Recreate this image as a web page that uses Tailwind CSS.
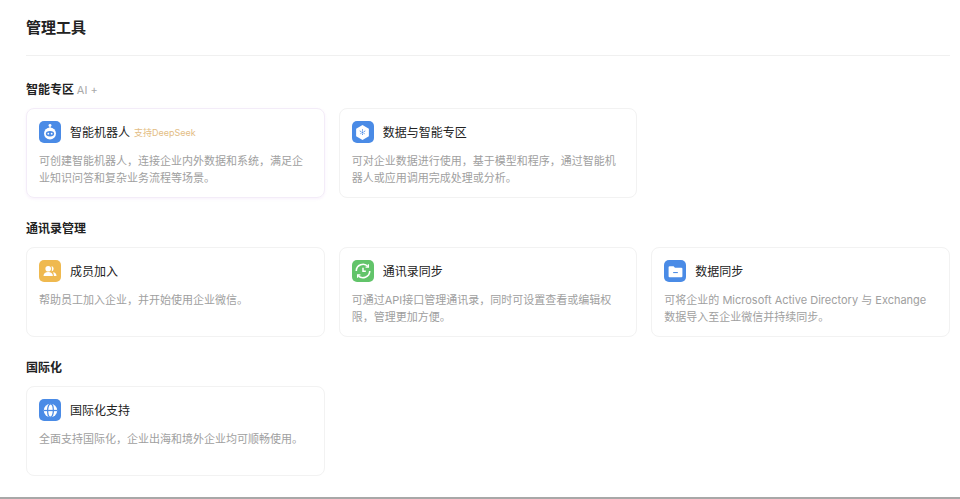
<!DOCTYPE html>
<html lang="zh-CN">
<head>
    <meta charset="UTF-8">
    <title>管理工具</title>
    <script src="https://cdn.jsdelivr.net/npm/@tailwindcss/browser@4"></script>
</head>
<body class="bg-white h-[499px] overflow-hidden font-['Inter','Noto_Sans_CJK_SC',sans-serif] text-[#222222]">
    <div class="h-[499px] pl-[26px] pr-[10px] pt-[17px] border-b-2 border-[#a8a8a8]">
        <!-- Header -->
        <h1 class="h-[39px] text-[15px] leading-[22px] font-bold border-b border-[#f0f0f0]">管理工具</h1>

        <!-- 智能专区 -->
        <h2 class="mt-[24px] h-[19px] text-[12px] leading-[19px] font-bold">智能专区 <span class="font-normal text-[#a9a9a9] text-[11px]">AI +</span></h2>
        <div class="mt-[9px] grid grid-cols-3 gap-x-[14px]">
            <div class="h-[90px] rounded-lg border border-[#f3ecf8] pt-[12px] px-[12px] shadow-[0_1px_3px_rgba(190,120,230,0.10)]">
                <div class="flex items-center h-[22px]">
                    <div class="w-[22px] h-[22px] rounded-[5px] bg-[#4a8be6] flex items-center justify-center">
                        <svg class="w-[18px] h-[18px]" viewBox="0 0 16 16"><circle cx="8" cy="2.200" r="1.300" fill="#fff"/><path d="M8 3v2" stroke="#fff"/><circle cx="8" cy="9.300" r="5.300" fill="#fff"/><ellipse cx="8" cy="9.500" rx="3.700" ry="2.400" fill="#4a8be6"/><circle cx="6.500" cy="9.500" r=".8" fill="#fff"/><circle cx="9.500" cy="9.500" r=".8" fill="#fff"/></svg>
                    </div>
                    <span class="ml-[9px] pt-[2px] text-[12px] leading-[22px]">智能机器人</span>
                    <span class="ml-[4px] pt-[1px] text-[9px] leading-[22px] text-[#e3bd84]">支持DeepSeek</span>
                </div>
                <p class="mt-[10px] text-[11px] leading-[17px] text-[#a0a0a0]">可创建智能机器人，连接企业内外数据和系统，满足企业知识问答和复杂业务流程等场景。</p>
            </div>
            <div class="h-[90px] rounded-lg border border-[#f2f2f2] pt-[12px] px-[12px]">
                <div class="flex items-center h-[22px]">
                    <div class="w-[22px] h-[22px] rounded-[5px] bg-[#4a8be6] flex items-center justify-center">
                        <svg class="w-[17px] h-[17px]" viewBox="0 0 16 16"><path d="M8 1l6 3.500v7L8 15l-6-3.500v-7z" fill="#fff"/><path d="M8 5v6M5.400 6.500l5.200 3M10.600 6.500l-5.200 3" stroke="#4a8be6" stroke-width=".9" stroke-dasharray="1.300 .7"/></svg>
                    </div>
                    <span class="ml-[9px] pt-[2px] text-[12px] leading-[22px]">数据与智能专区</span>
                </div>
                <p class="mt-[10px] text-[11px] leading-[17px] text-[#a0a0a0]">可对企业数据进行使用，基于模型和程序，通过智能机器人或应用调用完成处理或分析。</p>
            </div>
        </div>

        <!-- 通讯录管理 -->
        <h2 class="mt-[21px] h-[19px] text-[12px] leading-[19px] font-bold">通讯录管理</h2>
        <div class="mt-[9px] grid grid-cols-3 gap-x-[14px]">
            <div class="h-[90px] rounded-lg border border-[#f2f2f2] pt-[12px] px-[12px]">
                <div class="flex items-center h-[22px]">
                    <div class="w-[22px] h-[22px] rounded-[5px] bg-[#efb94f] flex items-center justify-center">
                        <svg class="w-[16px] h-[16px]" viewBox="0 0 16 16" fill="#fff"><circle cx="6.200" cy="5.700" r="2.800"/><path d="M1.500 13c0-2.500 2-3.900 4.700-3.900s4.700 1.400 4.700 3.900z"/><path d="M9.600 3a2.800 2.800 0 010 5.400c.3-.8.400-1.700.3-2.700-.1-1-.2-2-.3-2.700zM11 9.300c2 .2 3.500 1.500 3.500 3.700h-2.600c0-1.500-.3-2.700-.9-3.700z"/></svg>
                    </div>
                    <span class="ml-[9px] pt-[2px] text-[12px] leading-[22px]">成员加入</span>
                </div>
                <p class="mt-[10px] text-[11px] leading-[17px] text-[#a0a0a0]">帮助员工加入企业，并开始使用企业微信。</p>
            </div>
            <div class="h-[90px] rounded-lg border border-[#f2f2f2] pt-[12px] px-[12px]">
                <div class="flex items-center h-[22px]">
                    <div class="w-[22px] h-[22px] rounded-[5px] bg-[#62c46a] flex items-center justify-center">
                        <svg class="w-[18px] h-[18px]" viewBox="0 0 16 16" fill="none" stroke="#fff" stroke-width="1.400"><path d="M2 8a6 6 0 0110.400-4M14 8a6 6 0 01-10.400 4"/><path d="M12.800 2v2.500h-2.500M3.200 14v-2.500h2.500" stroke-width="1.100"/><path d="M8 5v3.200h2.500" stroke-width="1.300"/></svg>
                    </div>
                    <span class="ml-[9px] pt-[2px] text-[12px] leading-[22px]">通讯录同步</span>
                </div>
                <p class="mt-[10px] text-[11px] leading-[17px] text-[#a0a0a0]">可通过API接口管理通讯录，同时可设置查看或编辑权限，管理更加方便。</p>
            </div>
            <div class="h-[90px] rounded-lg border border-[#f2f2f2] pt-[12px] px-[12px]">
                <div class="flex items-center h-[22px]">
                    <div class="w-[22px] h-[22px] rounded-[5px] bg-[#4a8be6] flex items-center justify-center">
                        <svg class="w-[17px] h-[17px]" viewBox="0 0 16 16"><path d="M1.500 4a1 1 0 011-1h3.700l1.300 1.500h6a1 1 0 011 1V12.500a1 1 0 01-1 1h-11a1 1 0 01-1-1z" fill="#fff"/><path d="M5.800 9h4.400" stroke="#4a8be6" stroke-width="1"/></svg>
                    </div>
                    <span class="ml-[9px] pt-[2px] text-[12px] leading-[22px]">数据同步</span>
                </div>
                <p class="mt-[10px] text-[11px] leading-[17px] text-[#a0a0a0]">可将企业的 Microsoft Active Directory 与 Exchange 数据导入至企业微信并持续同步。</p>
            </div>
        </div>

        <!-- 国际化 -->
        <h2 class="mt-[21px] h-[19px] text-[12px] leading-[19px] font-bold">国际化</h2>
        <div class="mt-[9px] grid grid-cols-3 gap-x-[14px]">
            <div class="h-[90px] rounded-lg border border-[#f2f2f2] pt-[12px] px-[12px]">
                <div class="flex items-center h-[22px]">
                    <div class="w-[22px] h-[22px] rounded-[5px] bg-[#4a8be6] flex items-center justify-center">
                        <svg class="w-[17px] h-[17px]" viewBox="0 0 16 16"><circle cx="8" cy="8" r="6.300" fill="#fff"/><g fill="none" stroke="#4a8be6" stroke-width="1.200"><ellipse cx="8" cy="8" rx="2.700" ry="6.300"/><path d="M1.700 8h12.600"/></g></svg>
                    </div>
                    <span class="ml-[9px] pt-[2px] text-[12px] leading-[22px]">国际化支持</span>
                </div>
                <p class="mt-[10px] text-[11px] leading-[17px] text-[#a0a0a0]">全面支持国际化，企业出海和境外企业均可顺畅使用。</p>
            </div>
        </div>
    </div>
</body>
</html>
